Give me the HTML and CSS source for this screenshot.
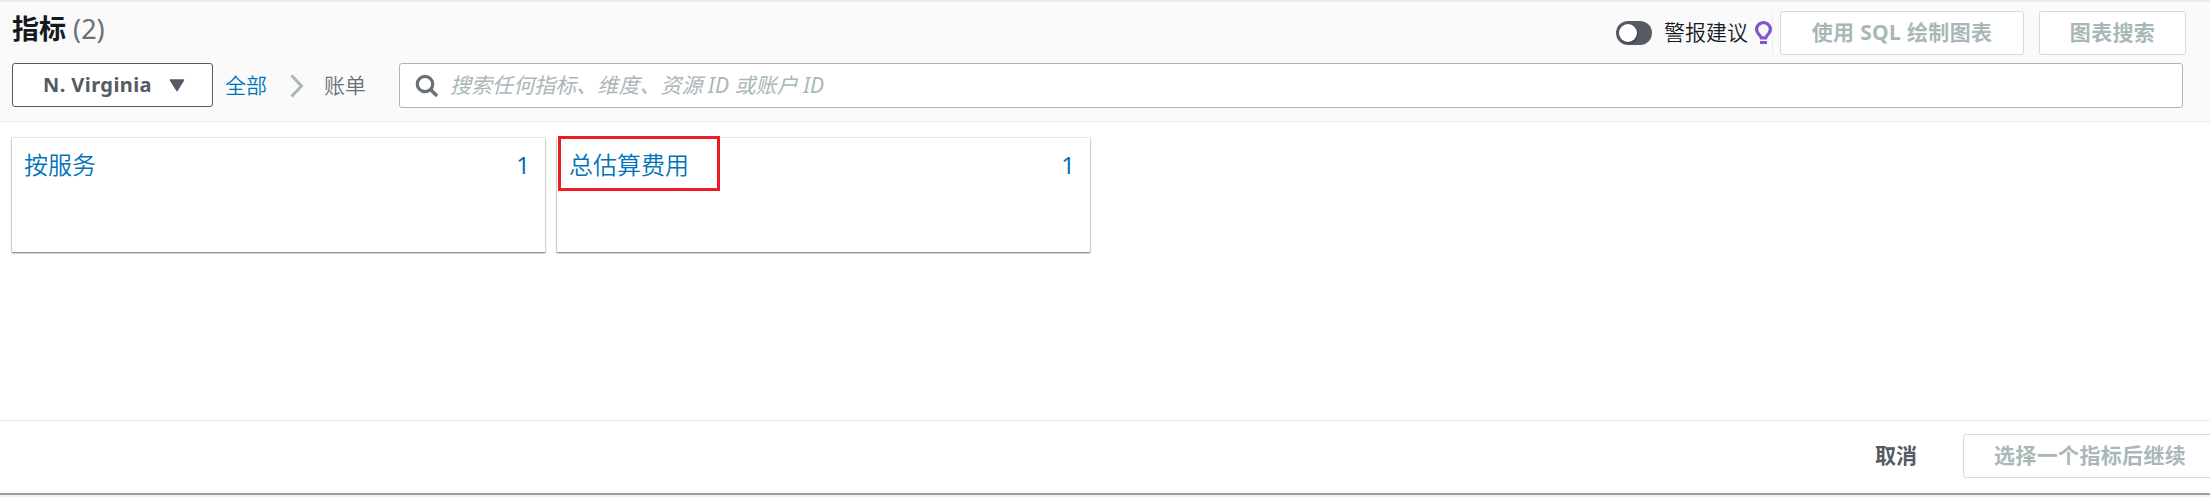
FILE: index.html
```html
<!DOCTYPE html>
<html lang="zh-CN">
<head>
<meta charset="utf-8">
<title>指标</title>
<link rel="stylesheet" href="styles.css">
</head>
<body>
<main class="panel">
  <header class="head">
    <div class="title-row">
      <h1 class="title">指标 <span class="count">(2)</span></h1>
      <div class="actions">
        <span class="toggle"><span class="knob"></span></span>
        <span class="toggle-label">警报建议</span>
        <span class="tip"><svg class="bulb" width="18" height="24" viewBox="0 0 18 24"><path fill-rule="evenodd" d="M8.500 0C3.800 0 0 3.700 0 8.300c0 3.300 2 5.200 3.700 7.200.7.900 1.100 1.700 1.300 2.900h7c.2-1.200.6-2 1.300-2.900C15 13.500 17 11.600 17 8.300 17 3.700 13.200 0 8.500 0zm0 3.200c2.900 0 5.200 2.300 5.200 5.100 0 2.200-1.500 3.700-3 5.500-.3.400-.6.900-.8 1.400H7.100c-.2-.5-.5-1-.8-1.400-1.500-1.800-3-3.300-3-5.500 0-2.800 2.300-5.100 5.200-5.100zM5 20h7v3H5z" fill="#8456ce"/></svg></span>
        <button class="btn sql">使用 SQL 绘制图表</button>
        <button class="btn chart">图表搜索</button>
      </div>
    </div>
    <div class="filter-row">
      <button class="region"><span>N. Virginia</span><svg width="16" height="13" viewBox="0 0 16 13"><path d="M1.500 1h13L8 11.500z" fill="#545b64" stroke="#545b64" stroke-width="1.500" stroke-linejoin="round"/></svg></button>
      <nav class="crumbs">
        <a class="crumb-link">全部</a>
        <svg width="14" height="24" viewBox="0 0 14 24"><path d="M1.500 1.500L11.500 12L1.500 22.500" fill="none" stroke="#aab7b8" stroke-width="3"/></svg>
        <span>账单</span>
      </nav>
      <div class="search">
        <svg width="24" height="24" viewBox="0 0 24 24"><circle cx="10" cy="10" r="7.700" fill="none" stroke="#687078" stroke-width="3.200"/><path d="M15.500 15.500L22 22" stroke="#687078" stroke-width="3.400"/></svg>
        <span class="placeholder">搜索任何指标、维度、资源 ID 或账户 ID</span>
      </div>
    </div>
  </header>
  <section class="cards">
    <a class="card"><span>按服务</span><span class="num">1</span></a>
    <a class="card"><span class="marked">总估算费用</span><span class="num">1</span></a>
  </section>
  <footer class="foot">
    <button class="cancel">取消</button>
    <button class="btn next">选择一个指标后继续</button>
  </footer>
</main>
</body>
</html>
```
FILE: styles.css
```css
* { box-sizing: border-box; }
body {
  margin: 0;
  height: 497px;
  overflow: hidden;
  background: #eee;
  font-family: "Noto Sans", "Noto Sans CJK SC", sans-serif;
  font-size: 21px;
  line-height: 30px;
}
button { font: inherit; padding: 0; margin: 0; }
svg { display: block; flex: none; }
.panel {
  display: flex;
  flex-direction: column;
  height: 495px;
  background: #fff;
  border-bottom: 2px solid #95a2a3;
}
.head {
  height: 122px;
  flex: none;
  padding-top: 9px;
  background: #fafafa;
  border-top: 2px solid #eaeded;
  border-bottom: 1px solid #eaeded;
}
.title-row { display: flex; justify-content: space-between; height: 44px; padding: 0 24px 0 12px; }
.title { margin: 0; font-size: 27px; line-height: 36px; font-weight: 700; color: #16191f; white-space: nowrap; }
.count { font-weight: 400; color: #687078; }
.actions { display: flex; align-items: center; white-space: nowrap; }
.toggle { width: 36px; height: 24px; padding: 3px; border-radius: 12px; background: #545b64; }
.knob { display: block; width: 18px; height: 18px; border-radius: 50%; background: #fff; box-shadow: 1px 1px 2px #16191f88; }
.toggle-label { width: 84px; margin: -2px 7px 0 12px; color: #16191f; font-weight: 350; }
.tip { display: flex; align-items: center; width: 18px; height: 44px; margin-right: 7px; border-right: 1px solid #eaeded; }
.btn {
  flex: none;
  height: 44px;
  padding-bottom: 2px;
  border: 1px solid #d5dbdb;
  border-radius: 3px;
  background: #fff;
  color: #aab7b8;
  font-weight: 700;
  letter-spacing: .35px;
  white-space: nowrap;
}
.sql { width: 244px; margin-right: 15px; }
.chart { width: 147px; }
.filter-row { display: flex; height: 45px; margin-top: 8px; padding: 0 27px 0 12px; }
.region {
  display: flex;
  align-items: center;
  width: 201px;
  height: 44px;
  padding-left: 30px;
  gap: 17px;
  border: 1px solid #545b64;
  border-radius: 3px;
  background: #fff;
  color: #545b64;
  font-size: 20px;
  font-weight: 700;
  letter-spacing: .42px;
}
.crumbs { display: flex; align-items: center; width: 174px; margin-left: 12px; color: #687078; font-weight: 350; }
.crumbs a, .crumbs span { margin-top: -2px; }
.crumbs svg { margin: 0 20px 0 23px; }
.crumb-link { color: #0073bb; }
.search { display: flex; align-items: center; flex: 1; height: 45px; padding-left: 15px; border: 1px solid #aab7b8; border-radius: 3px; background: #fff; }
.placeholder { margin: -2px 0 0 11px; color: #aab7b8; font-style: italic; letter-spacing: .05px; white-space: nowrap; }
.cards { display: flex; flex: 1; gap: 12px; padding: 16px 12px; align-items: flex-start; }
.card {
  display: flex;
  justify-content: space-between;
  width: 533px;
  height: 114px;
  padding: 9px 15px 0 12px;
  background: #fff;
  box-shadow: 0 1px 0 #879596, 0 1px 2px #879596, 0 0 0 1px #eaeded;
  color: #0073bb;
  font-size: 24px;
  line-height: 36px;
  font-weight: 350;
}
.num { font-weight: 400; }
.marked { height: 55px; width: 162px; margin: -11px 0 0 -11px; padding: 8px 0 0 8px; border: 3px solid #ed1c24; line-height: 36px; }
.foot { display: flex; height: 73px; flex: none; padding-top: 13px; border-top: 1px solid #eaeded; padding-left: 1875px; }
.cancel { width: 43px; height: 44px; padding-bottom: 2px; margin-right: 46px; border: 0; background: none; color: #545b64; font-weight: 700; white-space: nowrap; }
.next { width: 256px; padding-left: 30px; text-align: left; }
```
